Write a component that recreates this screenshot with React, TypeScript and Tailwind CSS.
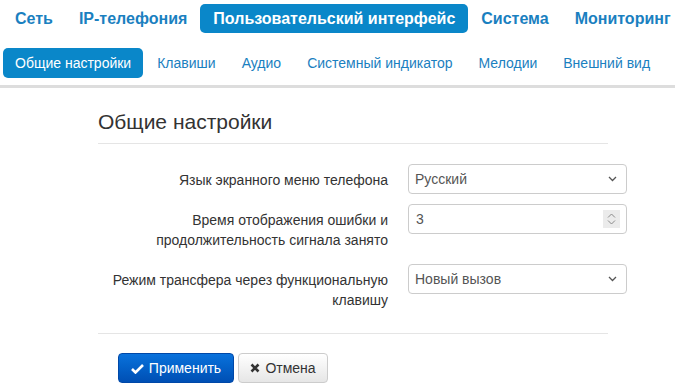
import React from "react";

const topNav = ["Сеть", "IP-телефония", "Пользовательский интерфейс", "Система", "Мониторинг"];
const subNav = ["Общие настройки", "Клавиши", "Аудио", "Системный индикатор", "Мелодии", "Внешний вид"];

function Chevron() {
  return (
    <svg width="9" height="6" viewBox="0 0 9 6" className="pointer-events-none absolute right-[10px] top-[12px]">
      <path d="M1 1 L4.5 4.5 L8 1" fill="none" stroke="#555" strokeWidth="1.3" />
    </svg>
  );
}

function SelectBox({ value }: { value: string }) {
  return (
    <div className="relative w-[219px]">
      <select
        defaultValue={value}
        className="h-[30px] w-full appearance-none rounded-[4px] border border-[#cccccc] bg-white pl-[6px] text-[14px] text-[#555555] outline-none"
      >
        <option>{value}</option>
      </select>
      <Chevron />
    </div>
  );
}

function NumberBox() {
  return (
    <div className="relative w-[219px]">
      <input
        type="text"
        defaultValue="3"
        className="h-[30px] w-full rounded-[4px] border border-[#cccccc] bg-white pl-[7px] text-[14px] text-[#555555] outline-none"
      />
      <div className="pointer-events-none absolute right-[7px] top-[6px] flex h-[18px] w-[17px] flex-col items-center justify-center gap-[2px] bg-[#ebebeb]">
        <svg width="9" height="5" viewBox="0 0 9 5">
          <path d="M1 4.5 L4.5 1 L8 4.5" fill="none" stroke="#8a8a8a" strokeWidth="1" />
        </svg>
        <svg width="9" height="5" viewBox="0 0 9 5">
          <path d="M1 0.5 L4.5 4 L8 0.5" fill="none" stroke="#8a8a8a" strokeWidth="1" />
        </svg>
      </div>
    </div>
  );
}

function Row({ label, children }: { label: React.ReactNode; children: React.ReactNode }) {
  return (
    <div className="mb-[10px] flex items-start">
      <div className="w-[290px] shrink-0 whitespace-nowrap pt-[6px] pb-[4px] text-right text-[14px] leading-[20px] text-[#333333]">
        {label}
      </div>
      <div className="ml-[20px] shrink-0">{children}</div>
    </div>
  );
}

export default function App() {
  return (
    <div className="min-h-[389px] w-[675px] bg-white" style={{ fontFamily: '"Liberation Sans", Arial, sans-serif' }}>
      <div className="flex pl-[2px] pt-[4px]">
        {topNav.map((t) => {
          const active = t === "Пользовательский интерфейс";
          return (
            <div
              key={t}
              className={
                "flex h-[29px] shrink-0 items-center whitespace-nowrap rounded-[5px] px-[13px] text-[16px] font-bold " +
                (active ? "bg-[#0a87c9] text-white" : "text-[#1a80c0]")
              }
            >
              {t}
            </div>
          );
        })}
      </div>
      <div className="mt-[15px] flex gap-[2px] pl-[3px]">
        {subNav.map((t) => {
          const active = t === "Общие настройки";
          return (
            <div
              key={t}
              className={
                "flex h-[30px] shrink-0 items-center whitespace-nowrap rounded-[5px] px-[12px] text-[14px] " +
                (active ? "bg-[#0a87c9] text-white" : "text-[#1a80c0]")
              }
            >
              {t}
            </div>
          );
        })}
      </div>
      <div className="mt-[7px] h-[3px] bg-[#dddddd]" />
      <div className="ml-[98px] w-[540px]">
        <h1 className="mt-[22px] text-[21px] leading-[24px] font-normal text-[#333333]">Общие настройки</h1>
        <div className="mt-[9px] h-[1px] w-[510px] bg-[#e5e5e5]" />
        <div className="mt-[20px]">
          <Row label="Язык экранного меню телефона">
            <SelectBox value="Русский" />
          </Row>
          <Row
            label={
              <>
                Время отображения ошибки и
                <br />
                продолжительность сигнала занято
              </>
            }
          >
            <NumberBox />
          </Row>
          <Row
            label={
              <>
                Режим трансфера через функциональную
                <br />
                клавишу
              </>
            }
          >
            <SelectBox value="Новый вызов" />
          </Row>
        </div>
        <div className="mt-[19px] h-[1px] w-[510px] bg-[#e5e5e5]" />
        <div className="ml-[20px] mt-[19px] flex gap-[4px]">
          <button className="flex h-[30px] w-[116px] items-center justify-center gap-[5px] rounded-[4px] border border-[#0048a8] bg-gradient-to-b from-[#0a72dc] to-[#004fb4] text-[14px] text-white">
            <svg width="13" height="11" viewBox="0 0 13 11">
              <path d="M1 6 L4.5 9.5 L12 2" fill="none" stroke="white" strokeWidth="2.6" />
            </svg>
            Применить
          </button>
          <button className="flex h-[30px] w-[90px] items-center justify-center gap-[5px] rounded-[4px] border border-[#cccccc] bg-gradient-to-b from-white to-[#e6e6e6] text-[14px] text-[#333333]">
            <svg width="10" height="10" viewBox="0 0 10 10">
              <path d="M1.5 1.5 L8.5 8.5 M8.5 1.5 L1.5 8.5" fill="none" stroke="#333" strokeWidth="2.6" />
            </svg>
            Отмена
          </button>
        </div>
      </div>
    </div>
  );
}
